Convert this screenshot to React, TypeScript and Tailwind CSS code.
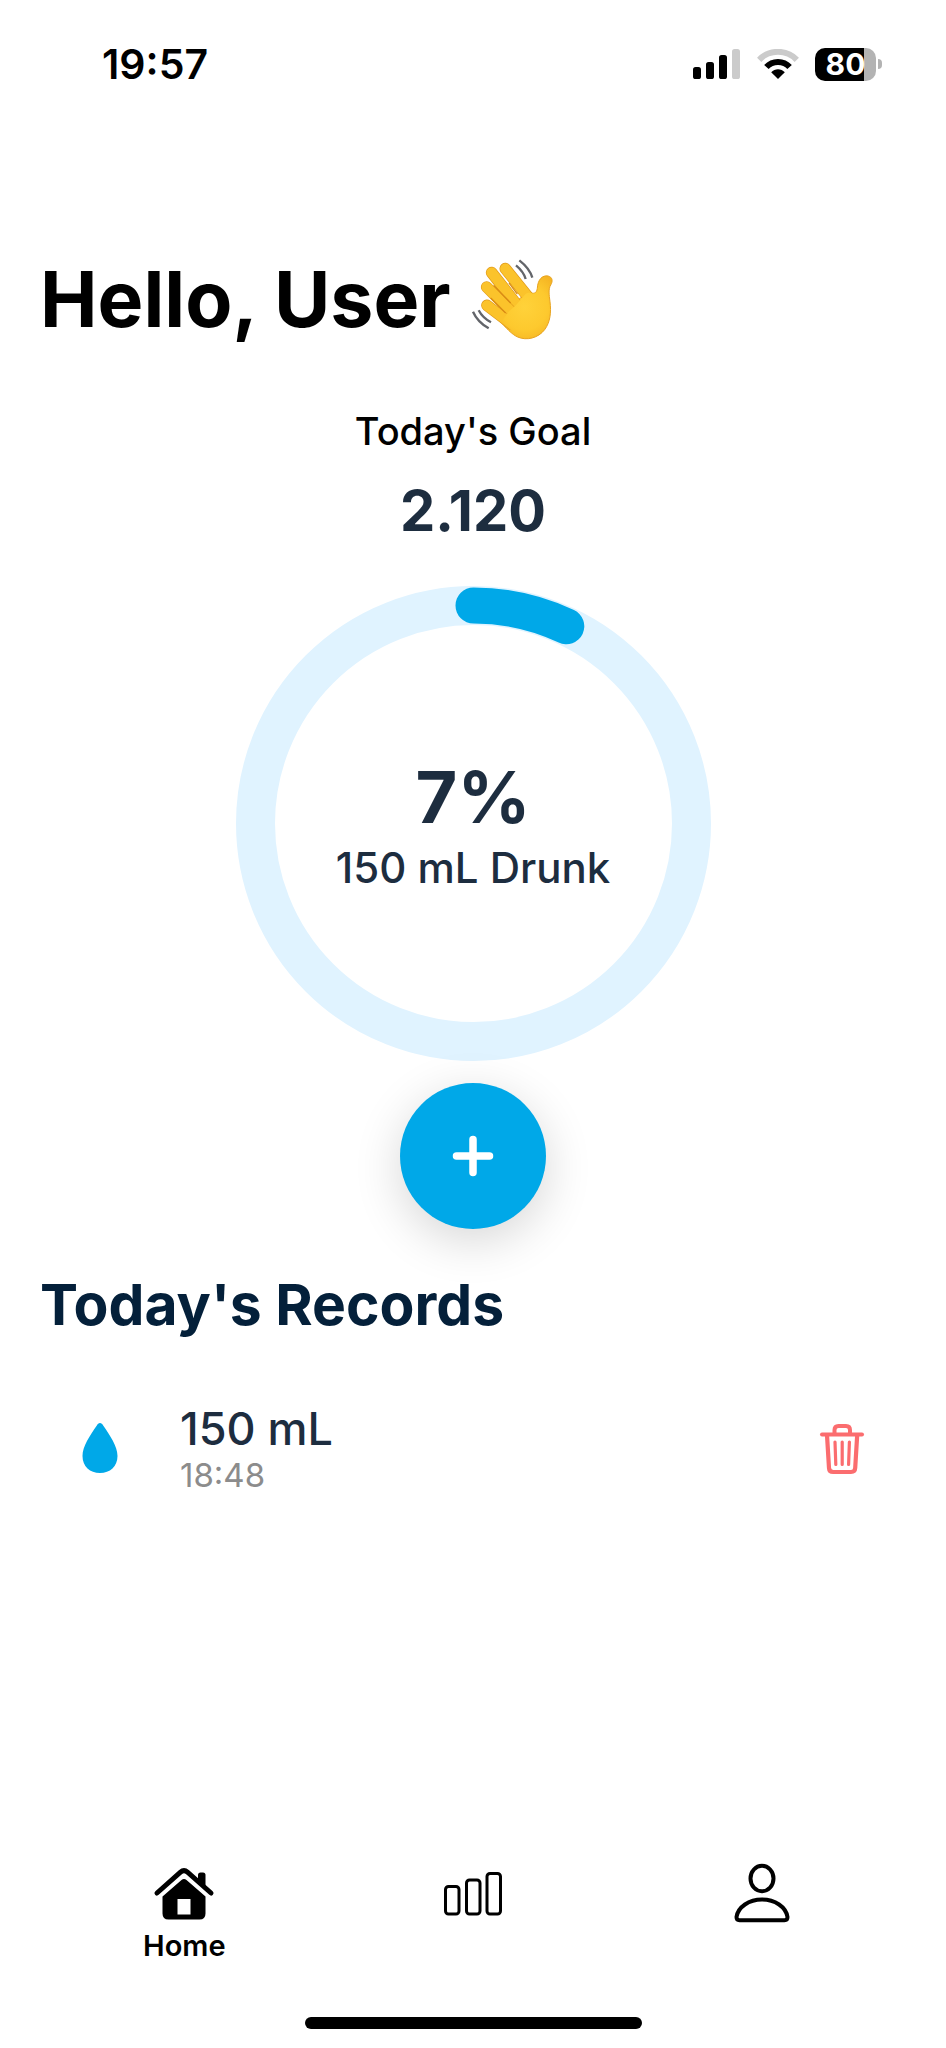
import React from "react";

const RING_RADIUS = 218;
const RING_LENGTH = 2 * Math.PI * RING_RADIUS;

function SignalIcon() {
  return (
    <svg className="h-[30px] w-[48px]" viewBox="0 0 48 30" aria-hidden="true">
      <rect x="0" y="18" width="8" height="12" rx="2.6" />
      <rect x="13" y="13" width="8" height="17" rx="2.6" />
      <rect x="26" y="6" width="8" height="24" rx="2.6" />
      <rect x="39" y="0" width="8" height="30" rx="2.6" fill="#cbcbcb" />
    </svg>
  );
}

function WifiIcon() {
  return (
    <svg className="h-[30px] w-[42px]" viewBox="0 0 42 30" fill="none" aria-hidden="true">
      <path d="M2.2 10.8C12.5 0.2 29.5 0.2 39.8 10.8" stroke="#cbcbcb" strokeWidth="6" />
      <path d="M9.4 18C15.5 11.2 26.500 11.2 32.600 18" stroke="#000" strokeWidth="6" />
      <path d="M14.200 23.200C18 19.200 24 19.200 27.800 23.200L21 30Z" fill="#000" />
    </svg>
  );
}

function Battery({ level }: { level: number }) {
  return (
    <div className="flex items-center gap-[2px]">
      <div className="flex h-[33px] w-[61px] items-center justify-center rounded-[10px] bg-[linear-gradient(to_right,#000_80%,#b3b3b3_80%)] text-[30px] leading-8 font-bold text-white">
        {level}
      </div>
      <div className="h-[10px] w-[4px] rounded-r-full bg-[#b3b3b3]" />
    </div>
  );
}

const FINGERS = [
  "M162 85L232 172",
  "M121 97L202 200",
  "M106 140L190 224",
  "M107 195L182 252",
];

function WavingHand() {
  return (
    <svg className="h-[83px] w-[82px]" viewBox="59 53 246 249" fill="none" role="img" aria-label="Waving hand">
      <defs>
        <radialGradient id="palm" gradientUnits="userSpaceOnUse" cx="220" cy="200" r="125">
          <stop offset="0" stopColor="#ffd23a" />
          <stop offset="0.55" stopColor="#fdc92e" />
          <stop offset="1" stopColor="#f3ae20" />
        </radialGradient>
      </defs>
      <path
        d="M150 222L232 152C244 164 256 160 258 144C259 118 273 104 290 107C304 110 305 123 298 134C291 146 293 162 296 184C300 216 297 245 280 268C261 293 226 302 199 290C181 282 166 264 142 239Z"
        fill="url(#palm)" stroke="#e8a320" strokeWidth="3"
      />
      {FINGERS.map((d) => (
        <g key={d} strokeLinecap="round">
          <path d={d} stroke="#e09a1c" strokeWidth="35" />
          <path d={d} stroke="#fbc32b" strokeWidth="31" />
        </g>
      ))}
      <path
        d="M170 216C180 206 190 200 197 191C206 181 214 172 222 162C235 150 244 164 254 158C270 172 289 176 291 190C295 220 292 243 276 264C257 287 228 296 202 285C184 276 169 259 151 242C158 234 165 226 170 216Z"
        fill="url(#palm)"
      />
      <path d="M128 136L177 187M174 129L197 160M119 174L162 217" stroke="#d98c15" strokeWidth="4" strokeLinecap="round" />
      <path d="M204 60Q235 84 243 112M194 75Q217 94 223 116M65 214Q78 244 112 264M82 210Q94 233 119 246" stroke="#63656a" strokeWidth="7" />
    </svg>
  );
}

function DropIcon() {
  return (
    <svg className="mt-4 h-[50px] w-[40px]" viewBox="0 0 40 50" fill="#00a8e8" aria-hidden="true">
      <path d="M20 0C18.500 0 17.800 1 17 2.200C10 12.500 2.500 23 2.500 33C2.500 43.500 10 50 20 50S37.500 43.500 37.500 33C37.500 23 30 12.500 23 2.200C22.200 1 21.500 0 20 0Z" />
    </svg>
  );
}

function TrashIcon() {
  return (
    <svg className="h-[52px] w-[48px]" viewBox="0 0 48 52" fill="none" stroke="#fb6d6f" strokeLinecap="round" strokeLinejoin="round" aria-hidden="true">
      <path d="M4 11.500H44" strokeWidth="4" />
      <path d="M16.500 11V7Q16.500 3 20.500 3H28Q32 3 32 7V11" strokeWidth="4" />
      <path d="M9 12L11 45Q11.200 49 15.200 49H33Q37 49 37.200 45L39.200 12" strokeWidth="4.200" />
      <path d="M17 19L17.800 41.500M24.200 19V41.500M31.400 19L30.600 41.500" strokeWidth="3.200" />
    </svg>
  );
}

function HomeIcon() {
  return (
    <svg className="h-[64px] w-[64px]" viewBox="0 0 64 64" aria-hidden="true">
      <path d="M5 31L28.500 10.200Q32 7.200 35.500 10.200L59 31" fill="none" stroke="#000" strokeWidth="5" strokeLinecap="round" strokeLinejoin="round" />
      <path d="M46 21V13Q46 10.500 48.500 10.500H51Q53.500 10.500 53.500 13V27Z" />
      <path fillRule="evenodd" d="M10.500 34.500L29.500 18Q32 16 34.500 18L53.500 34.500V51.500Q53.500 57.500 47.500 57.500H16.500Q10.500 57.500 10.500 51.500ZM25.500 37V52.500H38.500V37Z" />
    </svg>
  );
}

function StatsIcon() {
  return (
    <svg className="h-[64px] w-[64px]" viewBox="0 0 64 64" fill="none" stroke="#000" strokeWidth="3" aria-hidden="true">
      <rect x="4.500" y="24.500" width="13.500" height="27.500" rx="3" />
      <rect x="25.500" y="18" width="13.500" height="34" rx="3" />
      <rect x="46" y="11.500" width="13.500" height="40.500" rx="3" />
    </svg>
  );
}

function ProfileIcon() {
  return (
    <svg className="h-[64px] w-[64px]" viewBox="0 0 64 64" fill="none" stroke="#000" strokeWidth="4" strokeLinejoin="round" aria-hidden="true">
      <ellipse cx="32" cy="16.500" rx="11.500" ry="12.700" />
      <path d="M9.500 58.200H54.500Q57.500 58.200 57.500 55C56 45 45 37.500 32 37.500S8 45 6.500 55Q6.500 58.200 9.500 58.200Z" />
    </svg>
  );
}

function ProgressRing({ percent, amount }: { percent: number; amount: string }) {
  const arc = (RING_LENGTH * percent) / 100;
  return (
    <div className="mt-[43px] grid w-full max-w-[475px] place-items-center">
      <svg className="col-start-1 row-start-1 w-full" viewBox="0 0 475 475" fill="none" aria-hidden="true">
        <circle cx="237.500" cy="237.500" r={RING_RADIUS} stroke="#e0f3ff" strokeWidth="39" />
        <circle
          cx="237.500"
          cy="237.500"
          r={RING_RADIUS}
          stroke="#00a8e8"
          strokeWidth="36"
          strokeLinecap="round"
          strokeDasharray={`${arc} ${RING_LENGTH}`}
          transform="rotate(-90 237.5 237.5)"
        />
      </svg>
      <div className="col-start-1 row-start-1 text-center text-[#1d2d3f]">
        <p className="text-[72px] leading-[88px] font-bold">{percent}%</p>
        <p className="text-[42px] leading-[54px] font-medium">{amount} Drunk</p>
      </div>
    </div>
  );
}

export default function App() {
  return (
    <div className="flex min-h-screen flex-col bg-white font-['Inter','Liberation_Sans',sans-serif] text-black">
      <header className="flex h-32 items-center justify-between pr-16 pl-[102px]">
        <time className="text-[41px] leading-12 font-semibold">19:57</time>
        <div className="flex items-center gap-4">
          <SignalIcon />
          <WifiIcon />
          <Battery level={80} />
        </div>
      </header>

      <main className="flex flex-1 flex-col px-10 pt-[123px]">
        <h1 className="flex items-center gap-5 text-[77px] leading-24 font-bold">
          Hello, User <WavingHand />
        </h1>

        <section className="mt-[60px] flex flex-col items-center">
          <h2 className="text-[38px] leading-12 font-medium">Today's Goal</h2>
          <p className="mt-6 text-[56px] leading-16 font-bold text-[#1d2d3f]">2.120</p>
          <ProgressRing percent={7} amount="150 mL" />
          <button
            type="button"
            aria-label="Add drink"
            className="mt-[22px] flex size-[146px] items-center justify-center rounded-full bg-[#00a8e8] shadow-[0_12px_48px_rgba(0,0,0,0.16)]"
          >
            <svg className="size-[42px]" viewBox="0 0 42 42" fill="none" stroke="#fff" strokeWidth="7.500" strokeLinecap="round" aria-hidden="true">
              <path d="M21 4.500V37.500M4.500 21H37.500" />
            </svg>
          </button>
        </section>

        <section className="mt-10">
          <h2 className="text-[57px] leading-[72px] font-bold text-[#04203a]">Today's Records</h2>
          <ul className="mt-[66px]">
            <li className="flex items-start px-10">
              <DropIcon />
              <div className="ml-[60px] flex-1">
                <p className="text-[45px] leading-11 font-medium text-[#1d2d3f]">150 mL</p>
                <p className="text-[33px] leading-12 text-[#8c8c8c]">18:48</p>
              </div>
              <button type="button" aria-label="Delete record" className="mt-4">
                <TrashIcon />
              </button>
            </li>
          </ul>
        </section>
      </main>

      <nav className="grid grid-cols-3 px-10 pb-[55px]">
        <a href="#home" aria-current="page" className="flex flex-col items-center gap-1 text-[29px] leading-8 font-semibold">
          <HomeIcon />
          Home
        </a>
        <a href="#statistics" aria-label="Statistics" className="flex flex-col items-center">
          <StatsIcon />
        </a>
        <a href="#profile" aria-label="Profile" className="flex flex-col items-center">
          <ProfileIcon />
        </a>
      </nav>
      <div className="mb-[19px] h-3 w-[337px] self-center rounded-full bg-black" />
    </div>
  );
}
